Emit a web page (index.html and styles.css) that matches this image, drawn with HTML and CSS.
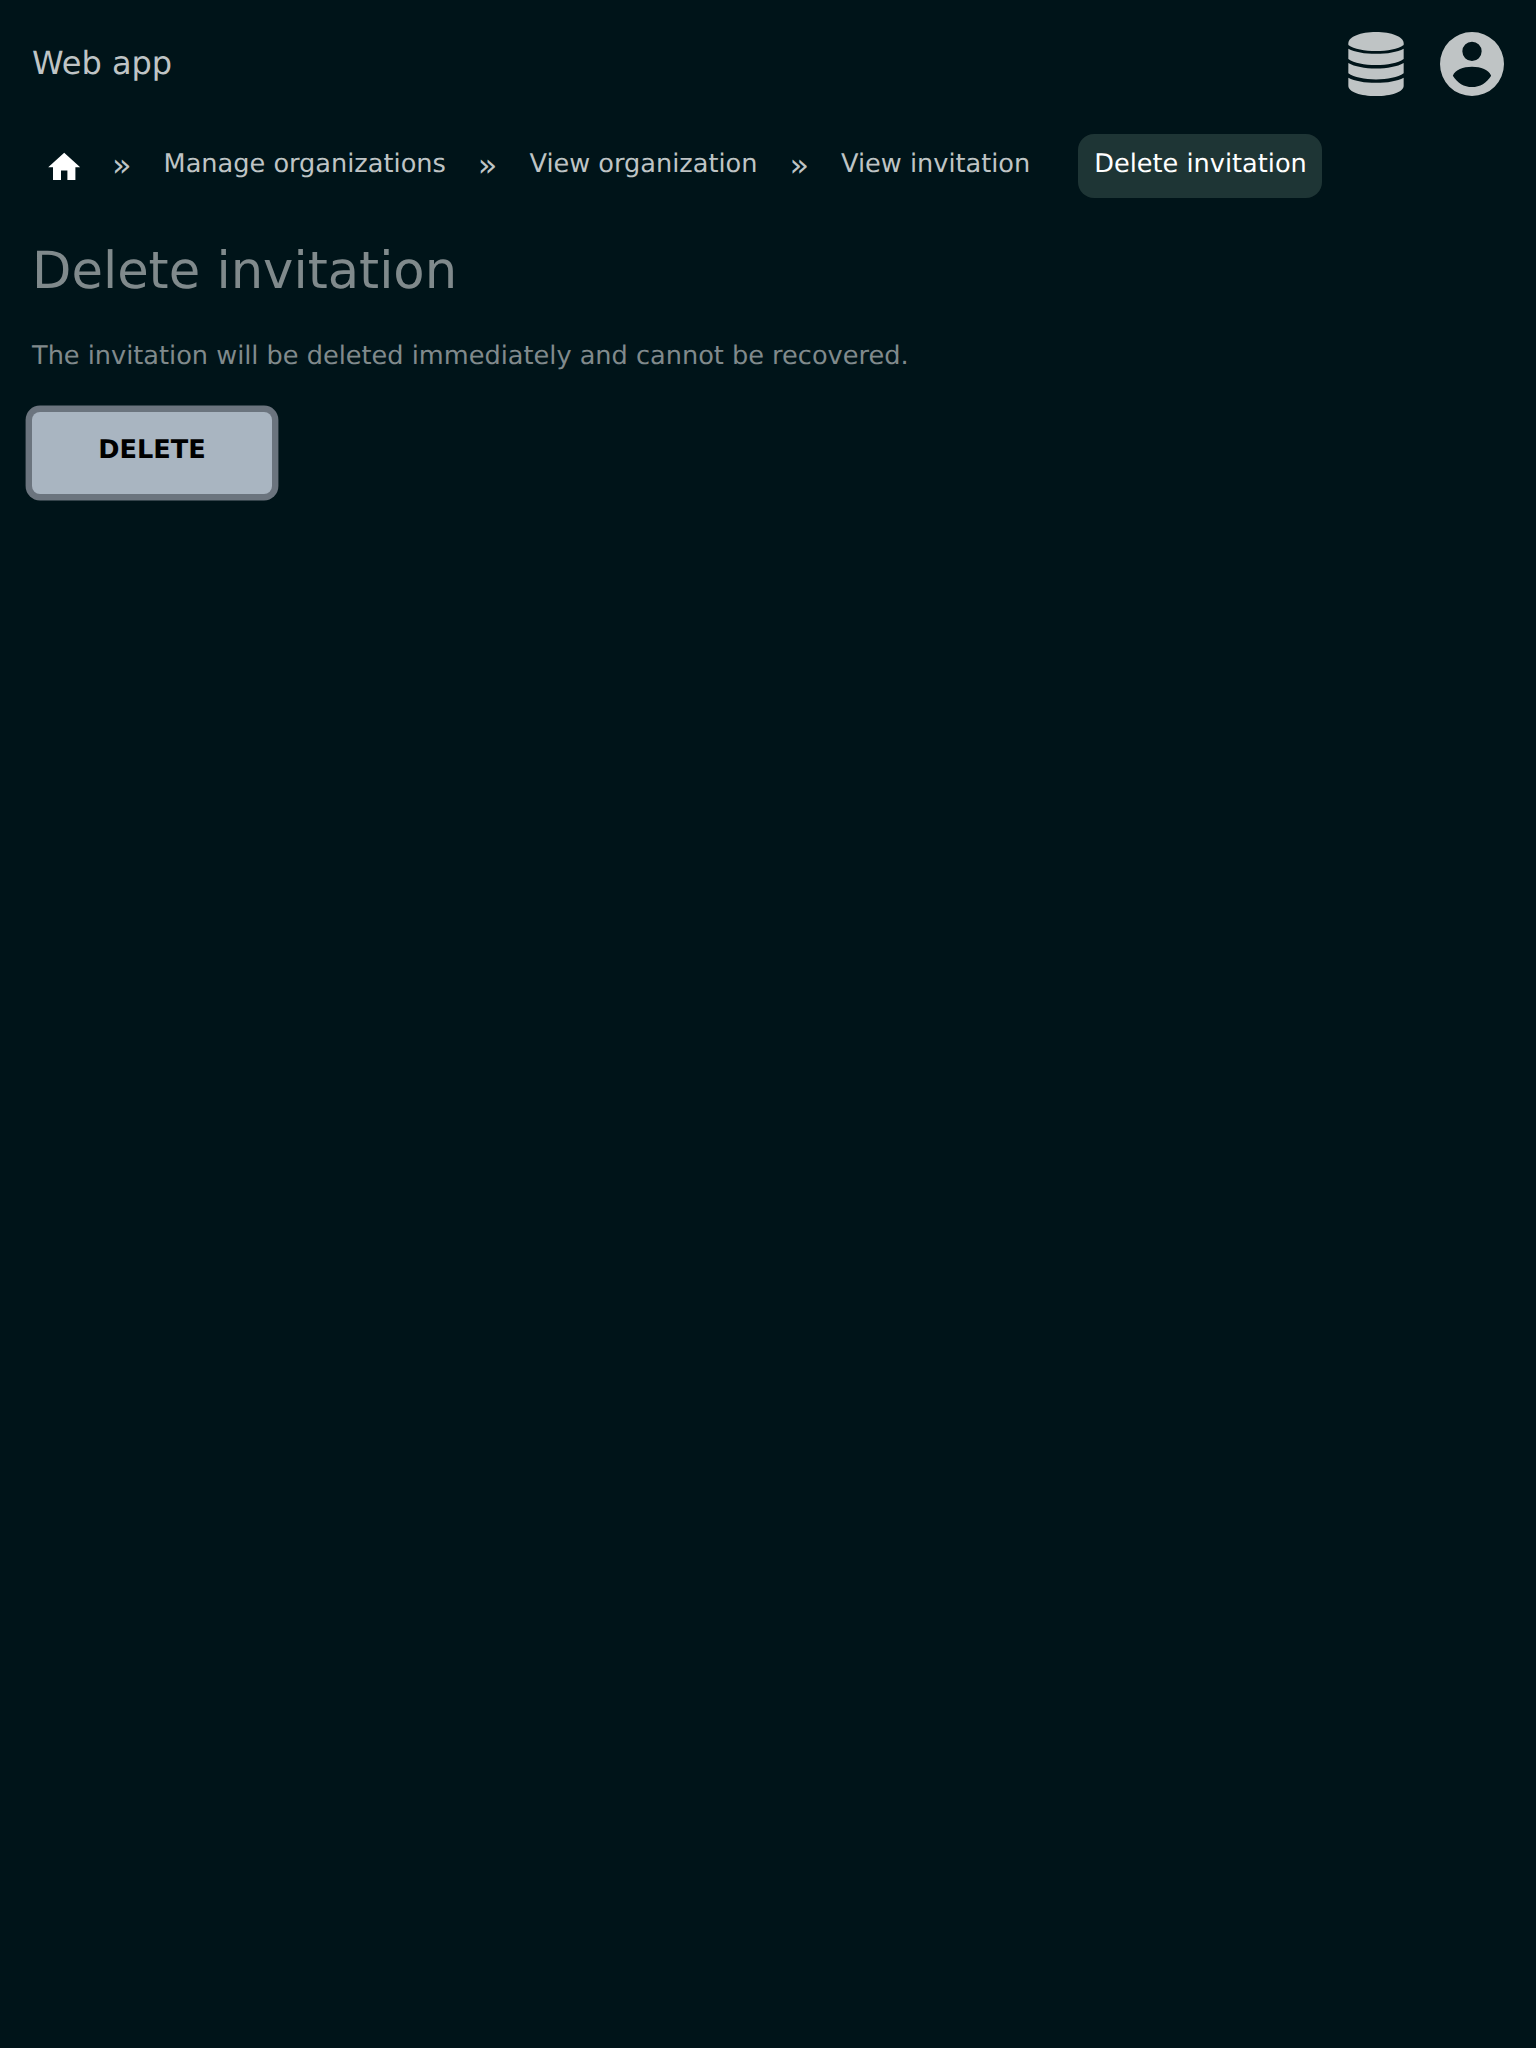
FILE: index.html
```html
<!DOCTYPE html>
<html lang="en">
<head>
<meta charset="utf-8">
<title>Delete invitation</title>
<link rel="stylesheet" href="styles.css">
</head>
<body>
<header class="topbar">
  <a class="brand">Web app</a>
  <div class="actions">
    <svg class="icon-data" viewBox="0 0 168 192" role="img" aria-label="Data">
      <path d="M1 34C1 14 38 0 84 0S167 14 167 34V39C150 51 118 57 84 57S18 51 1 39Z"/>
      <path d="M1 50C20 60 50 65.500 84 65.500S148 60 167 50V81C150 93 118 99 84 99S18 93 1 81Z"/>
      <path d="M1 93C20 104 50 109.500 84 109.500S148 104 167 93V124C150 136 118 142.500 84 142.500S18 136 1 124Z"/>
      <path d="M1 137C20 147 50 152.500 84 152.500S148 147 167 137V161C167 180 130 192 84 192S1 180 1 161Z"/>
    </svg>
    <svg class="icon-user" viewBox="0 0 192 192" role="img" aria-label="Account">
      <path fill-rule="evenodd" d="M96 0a96 96 0 1 1 0 192a96 96 0 1 1 0-192ZM96 29a29 29 0 1 0 0 58a29 29 0 1 0 0-58ZM38.500 131C46 114 69 104.500 96 104.500S146 114 153.500 131C140 153 120 165 96 165S52 153 38.500 131Z"/>
    </svg>
  </div>
</header>
<nav class="crumbs">
  <a class="crumb crumb-home"><svg class="icon-home" viewBox="0 0 24 24" role="img" aria-label="Home"><path d="M10 20v-6h4v6h5v-8h3L12 3 2 12h3v8z"/></svg></a>
  <span class="sep">»</span>
  <a class="crumb">Manage organizations</a>
  <span class="sep">»</span>
  <a class="crumb">View organization</a>
  <span class="sep">»</span>
  <a class="crumb">View invitation</a>
  <a class="crumb crumb-current">Delete invitation</a>
</nav>
<main class="content">
  <h1 class="title">Delete invitation</h1>
  <p class="note">The invitation will be deleted immediately and cannot be recovered.</p>
  <button class="delete">DELETE</button>
</main>
</body>
</html>
```
FILE: styles.css
```css
* { box-sizing: border-box; }
body {
  margin: 0;
  min-height: 100vh;
  background: #001419;
  color: #808a8c;
  font: 25.6px/1 "DejaVu Sans", sans-serif;
  text-rendering: geometricPrecision;
}
.topbar {
  display: flex;
  justify-content: space-between;
  align-items: center;
  padding: 32px;
  height: 128px;
  color: #bfc4c5;
}
.brand { padding-bottom: 2px; font-size: 32px; }
.actions { display: flex; gap: 36px; }
.actions svg { display: block; fill: currentColor; }
.icon-data { width: 56px; height: 64px; }
.icon-user { width: 64px; height: 64px; }
.crumbs {
  display: flex;
  gap: 16px;
  padding: 6px 32px 0;
  color: #bfc4c5;
}
.crumb {
  height: 64px;
  padding: 18px 16px 0;
  border-radius: 16px;
  white-space: nowrap;
}
.crumb-home {
  display: flex;
  justify-content: center;
  align-items: center;
  width: 64px;
  padding: 2px 0 0;
}
.icon-home { width: 38.4px; height: 38.4px; flex: none; fill: #fff; }
.sep { padding-top: 15px; font-size: 32px; }
.crumb-current { margin-left: 16px; padding-right: 15.5px; background: #1e3535; color: #fff; }
.content { padding: 48px 32px 32px; }
.title { margin: 0; font-size: 51.2px; font-weight: 400; }
.note { margin: 47px 0 42.2px; }
.delete {
  display: block;
  width: 240px;
  height: 82px;
  padding: 26px 0 30px;
  border: 0;
  border-radius: 8px;
  background: #a9b5c1;
  box-shadow: 0 0 0 6.4px #6b747e;
  color: #000;
  font: bold 25.6px/1 "DejaVu Sans", sans-serif;
  text-rendering: inherit;
}
```
